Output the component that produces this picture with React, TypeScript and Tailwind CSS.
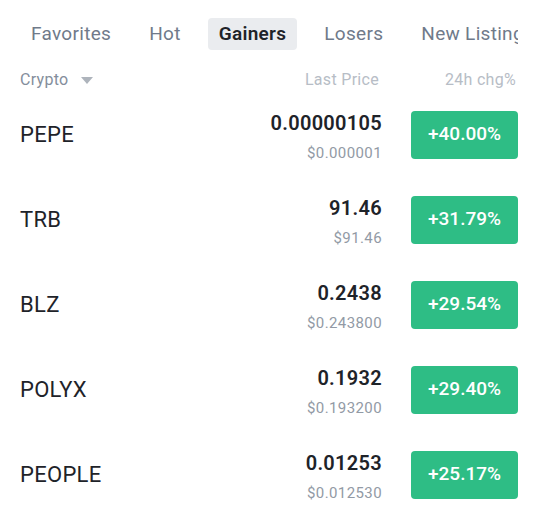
const tabs = ["Favorites", "Hot", "Gainers", "Losers", "New Listing"];

const rows = [
  { symbol: "PEPE", price: "0.00000105", usd: "$0.000001", change: "+40.00%" },
  { symbol: "TRB", price: "91.46", usd: "$91.46", change: "+31.79%" },
  { symbol: "BLZ", price: "0.2438", usd: "$0.243800", change: "+29.54%" },
  { symbol: "POLYX", price: "0.1932", usd: "$0.193200", change: "+29.40%" },
  { symbol: "PEOPLE", price: "0.01253", usd: "$0.012530", change: "+25.17%" },
];

export default function App() {
  return (
    <div className="w-[538px] h-[518px] bg-white overflow-hidden font-['Roboto','Liberation_Sans',sans-serif]">
      {/* tabs */}
      <div className="flex gap-4 pl-5 mr-5 pt-[18px] overflow-hidden whitespace-nowrap">
        {tabs.map((tab) => (
          <div
            key={tab}
            className={
              tab === "Gainers"
                ? "shrink-0 h-8 px-[11px] flex items-center rounded bg-[#eaecef] text-[19px] tracking-[0.3px] font-semibold text-[#1e2329]"
                : "shrink-0 h-8 px-[11px] flex items-center text-[19px] tracking-[0.3px] text-[#707a8a]"
            }
          >
            {tab}
          </div>
        ))}
      </div>

      {/* column header */}
      <div className="flex items-center h-6 mt-[18px] px-5 text-[16px] tracking-[0.3px]">
        <div className="flex-1 flex items-center gap-3 text-[#848e9c]">
          Crypto
          <svg width="12" height="7" viewBox="0 0 12 7" aria-hidden="true">
            <path d="M0 0h12L6 7z" fill="#aeb4bc" />
          </svg>
        </div>
        <div className="mr-[2px] text-[#b7bdc6]">Last Price</div>
        <div className="w-[137px] pr-[2px] text-right text-[#b7bdc6]">24h chg%</div>
      </div>

      {/* rows */}
      <div className="flex flex-col">
        {rows.map((row) => (
          <div key={row.symbol} className="flex items-center h-[85px] px-5">
            <div className="flex-1 text-[22px] tracking-[0.3px] text-[#1e2329]">{row.symbol}</div>
            <div className="flex flex-col items-end pt-[2px]">
              <div className="text-[20px] leading-7 tracking-[0.3px] font-semibold text-[#1e2329]">{row.price}</div>
              <div className="text-[15px] leading-5 mt-[6px] tracking-[0.4px] text-[#929aa5]">{row.usd}</div>
            </div>
            <div className="ml-[29px] w-[107px] h-12 rounded bg-[#2ebd85] flex items-center justify-center text-[19px] font-medium text-white">
              {row.change}
            </div>
          </div>
        ))}
      </div>
    </div>
  );
}
